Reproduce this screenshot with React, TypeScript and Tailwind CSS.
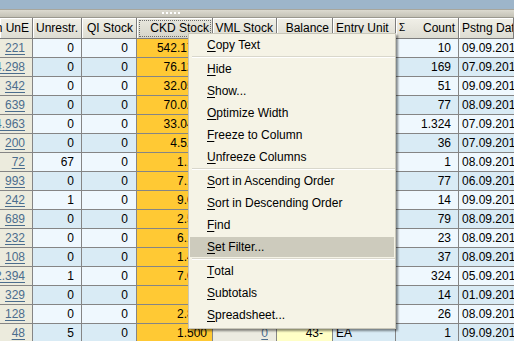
import React from "react";

type Row = { a: string; u: string; c: string; v: string; b: string; e: string; n: string; d: string };

const rows: Row[] = [
  { a: "221", u: "0", c: "542.1750", v: "", b: "", e: "", n: "10", d: "09.09.2010" },
  { a: "4.298", u: "0", c: "76.1250", v: "", b: "", e: "", n: "169", d: "07.09.2010" },
  { a: "342", u: "0", c: "32.0500", v: "", b: "", e: "", n: "51", d: "09.09.2010" },
  { a: "639", u: "0", c: "70.0200", v: "", b: "", e: "", n: "77", d: "08.09.2010" },
  { a: "4.963", u: "0", c: "33.0400", v: "", b: "", e: "", n: "1.324", d: "07.09.2010" },
  { a: "200", u: "0", c: "4.5200", v: "", b: "", e: "", n: "36", d: "07.09.2010" },
  { a: "72", u: "67", c: "1.140", v: "", b: "", e: "", n: "1", d: "08.09.2010" },
  { a: "993", u: "0", c: "7.120", v: "", b: "", e: "", n: "77", d: "06.09.2010" },
  { a: "242", u: "1", c: "9.030", v: "", b: "", e: "", n: "14", d: "09.09.2010" },
  { a: "689", u: "0", c: "2.560", v: "", b: "", e: "", n: "79", d: "08.09.2010" },
  { a: "232", u: "0", c: "6.130", v: "", b: "", e: "", n: "23", d: "08.09.2010" },
  { a: "108", u: "0", c: "1.420", v: "", b: "", e: "", n: "37", d: "08.09.2010" },
  { a: "2.394", u: "1", c: "7.060", v: "", b: "", e: "", n: "324", d: "05.09.2010" },
  { a: "329", u: "0", c: "", v: "", b: "", e: "", n: "14", d: "01.09.2010" },
  { a: "128", u: "0", c: "2.840", v: "", b: "", e: "", n: "26", d: "08.09.2010" },
  { a: "48", u: "5", c: "1.500", v: "0", b: "43-", e: "EA", n: "1", d: "09.09.2010" },
];

const LINK = "text-[#4b6d8d] underline decoration-[#4b6d8d] underline-offset-[2px]";

function Head({
  w,
  children,
  left = false,
  focused = false,
}: {
  w: string;
  children: React.ReactNode;
  left?: boolean;
  focused?: boolean;
}) {
  return (
    <div
      className={
        w +
        " shrink-0 h-full overflow-hidden flex items-center whitespace-nowrap border-r border-b border-[#7d7d7d] shadow-[inset_1px_1px_0_#ffffff] " +
        (focused
          ? "bg-gradient-to-b from-[#e9e8df] to-[#d6d5ca] outline outline-1 outline-dotted outline-[#6d6d6d] outline-offset-[-3px] "
          : "bg-gradient-to-b from-[#f1f0e8] to-[#dddcd2] ") +
        (left ? "justify-start pl-[3px]" : "justify-end pr-[3px]")
      }
    >
      {children}
    </div>
  );
}

function Item({ first, rest, active = false }: { first: string; rest: string; active?: boolean }) {
  return (
    <div className="h-[22px] flex items-stretch py-[1px] px-[1px]">
      <div
        className={
          "flex-1 flex items-center pl-[17px] whitespace-nowrap " + (active ? "bg-[#cdcbbd]" : "")
        }
      >
        <span className="underline underline-offset-[2px]">{first}</span>
        <span>{rest}</span>
      </div>
    </div>
  );
}

function Sep() {
  return (
    <div className="pl-[3px]">
      <div className="h-[1px] bg-[#d9d7cc]" />
      <div className="h-[1px] bg-[#ffffff]" />
    </div>
  );
}

export default function App() {
  return (
    <div className="relative w-[514px] h-[341px] overflow-hidden bg-[#eff8fe] font-['Liberation_Sans',Arial,sans-serif] text-[12px] leading-none text-black">
      {/* top blue strip */}
      <div className="h-[9px] bg-[#9db5ca]" />
      {/* gray grip band */}
      <div className="h-[9px] flex items-start justify-start pl-[162px] border-t border-[#a8a69c] bg-gradient-to-b from-[#dcdad0] to-[#c4c2b6] border-b border-b-[#9a988e]">
        <div className="mt-[2px] flex gap-[2px]">
          <div className="w-[2px] h-[2px] bg-white" />
          <div className="w-[2px] h-[2px] bg-white" />
          <div className="w-[2px] h-[2px] bg-white" />
          <div className="w-[2px] h-[2px] bg-white" />
          <div className="w-[2px] h-[2px] bg-white" />
        </div>
      </div>

      {/* header row */}
      <div className="flex h-[21px]">
        <Head w="w-[33px]">Open UnE</Head>
        <Head w="w-[49px]">Unrestr.</Head>
        <Head w="w-[55px]">QI Stock</Head>
        <Head w="w-[76px]" focused>
          CKD Stock
        </Head>
        <Head w="w-[64px]">VML Stock</Head>
        <Head w="w-[56px]">Balance</Head>
        <Head w="w-[63px]" left>
          Entry Unit
        </Head>
        <div className="w-[63px] shrink-0 h-full flex items-center justify-between pl-[3px] pr-[3px] border-r border-b border-[#7d7d7d] shadow-[inset_1px_1px_0_#ffffff] bg-gradient-to-b from-[#f1f0e8] to-[#dddcd2] whitespace-nowrap">
          <span className="text-[10px]">Σ</span>
          <span>Count</span>
        </div>
        <Head w="w-[55px]" left>
          Pstng Date
        </Head>
      </div>

      {/* data rows */}
      {rows.map((r, i) => {
        const alt = i % 2 === 1 ? "bg-[#d9ebf5]" : "bg-[#eff8fe]";
        return (
          <div key={i} className="flex h-[19px] border-b border-[#858585]">
            <div className="w-[33px] shrink-0 h-full overflow-hidden flex items-center justify-end pr-[7px] border-r border-[#858585] bg-[#ecebdd] whitespace-nowrap">
              <span className={LINK}>{r.a}</span>
            </div>
            <div className={"w-[49px] shrink-0 h-full flex items-center justify-end pr-[7px] border-r border-[#858585] " + alt}>
              {r.u}
            </div>
            <div className={"w-[55px] shrink-0 h-full flex items-center justify-end pr-[8px] border-r border-[#858585] " + alt}>
              0
            </div>
            <div className="w-[76px] shrink-0 h-full overflow-hidden flex items-center justify-end pr-[5px] border-r border-[#858585] bg-[#ffc934] whitespace-nowrap">
              {r.c}
            </div>
            <div className="w-[64px] shrink-0 h-full flex items-center justify-end pr-[8px] border-r border-[#858585] bg-[#ecebe1]">
              <span className={LINK}>{r.v}</span>
            </div>
            <div className="w-[56px] shrink-0 h-full flex items-center justify-end pr-[9px] border-r border-[#858585] bg-[#ffffc6]">
              {r.b}
            </div>
            <div className={"w-[63px] shrink-0 h-full flex items-center justify-start pl-[3px] border-r border-[#858585] " + alt}>
              {r.e}
            </div>
            <div className={"w-[63px] shrink-0 h-full flex items-center justify-end pr-[7px] border-r border-[#858585] " + alt}>
              {r.n}
            </div>
            <div className={"w-[55px] shrink-0 h-full overflow-hidden flex items-center justify-start pl-[3px] whitespace-nowrap " + alt}>
              {r.d}
            </div>
          </div>
        );
      })}

      {/* context menu */}
      <div className="absolute left-[188px] top-[33px] w-[208px] h-[296px] bg-[#f5f3e6] border border-[#c9c7b9] shadow-[2px_2px_2px_rgba(0,0,0,0.45)]">
        <Item first="C" rest="opy Text" />
        <Sep />
        <Item first="H" rest="ide" />
        <Item first="S" rest="how..." />
        <Item first="O" rest="ptimize Width" />
        <Item first="F" rest="reeze to Column" />
        <Item first="U" rest="nfreeze Columns" />
        <Sep />
        <Item first="S" rest="ort in Ascending Order" />
        <Item first="S" rest="ort in Descending Order" />
        <Item first="F" rest="ind" />
        <Item first="S" rest="et Filter..." active />
        <Sep />
        <Item first="T" rest="otal" />
        <Item first="S" rest="ubtotals" />
        <Item first="S" rest="preadsheet..." />
      </div>
    </div>
  );
}
